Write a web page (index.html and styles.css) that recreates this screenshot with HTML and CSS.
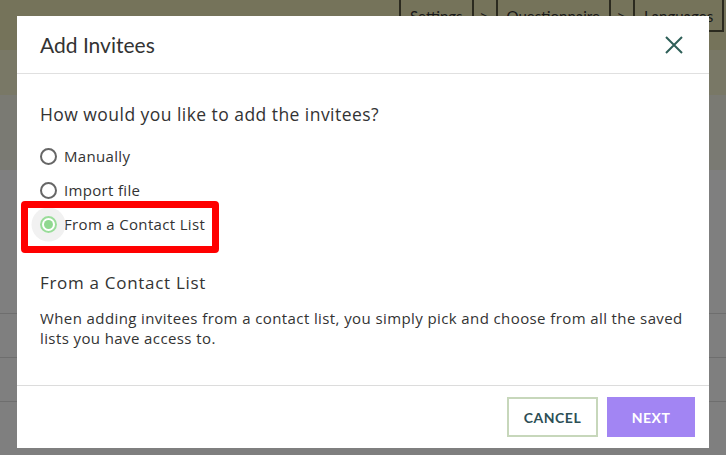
FILE: index.html
```html
<!DOCTYPE html>
<html lang="en">
<head>
    <meta charset="UTF-8">
    <meta name="viewport" content="width=device-width, initial-scale=1.0">
    <title>Add Invitees</title>
    <link rel="stylesheet" href="styles.css">
</head>
<body>
    <header class="topbar">
        <nav class="crumbs">
            <span class="crumb">Settings</span>
            <span class="sep">&gt;</span>
            <span class="crumb">Questionnaire</span>
            <span class="sep">&gt;</span>
            <span class="crumb">Languages</span>
        </nav>
    </header>
    <div class="band band-a"></div>
    <div class="band band-b"></div>
    <div class="table">
        <div class="table-row"></div>
        <div class="table-row"></div>
        <div class="table-row"></div>
    </div>

    <!-- Add invitees dialog -->
    <div class="overlay">
        <div class="modal" role="dialog" aria-labelledby="modalTitle">
            <div class="modal-head">
                <h2 class="modal-title" id="modalTitle">Add Invitees</h2>
                <button class="close" type="button" aria-label="Close">
                    <svg width="18" height="18" viewBox="0 0 18 18">
                        <path d="M1 1L17 17M17 1L1 17" stroke="#2e5f58" stroke-width="2" fill="none"/>
                    </svg>
                </button>
            </div>

            <div class="modal-body">
                <h3 class="question">How would you like to add the invitees?</h3>
                <div class="options">
                    <label class="option">
                        <span class="radio"></span>
                        <span>Manually</span>
                    </label>
                    <label class="option">
                        <span class="radio"></span>
                        <span>Import file</span>
                    </label>
                    <label class="option is-selected">
                        <span class="radio"></span>
                        <span>From a Contact List</span>
                        <span class="highlight"></span>
                    </label>
                </div>

                <h3 class="detail-title">From a Contact List</h3>
                <p class="detail-text">When adding invitees from a contact list, you simply pick and choose from all the saved lists you have access to.</p>
            </div>

            <div class="modal-foot">
                <button class="btn btn-outline" type="button">Cancel</button>
                <button class="btn btn-primary" type="button">Next</button>
            </div>
        </div>
    </div>
</body>
</html>
```

FILE: styles.css
```css
/* General Styles */
* {
    box-sizing: border-box;
}

body {
    margin: 0;
    height: 455px;
    overflow: hidden;
    font-family: 'Open Sans', sans-serif;
    color: #333;
    background-color: #fff;
}

/* Page behind the dialog */
.topbar {
    height: 50px;
    padding-left: 399px;
    background-color: #eae6b4;
    overflow: hidden;
}

.crumbs {
    display: flex;
    white-space: nowrap;
}

.crumb {
    flex: none;
    height: 32px;
    padding: 2px 9px 0;
    display: flex;
    align-items: center;
    border: 2px solid #56543f;
    border-top: none;
    font-family: 'Lato', sans-serif;
    font-size: 15px;
}

.sep {
    flex: none;
    width: 22px;
    text-align: center;
    line-height: 32px;
    font-size: 15px;
}

.band-a {
    height: 45px;
    background-color: #f2f0cc;
}

.band-b {
    height: 75px;
    background-color: #f4f4e6;
}

.table {
    margin-top: 143px;
}

.table-row {
    height: 44px;
    border-top: 1px solid #dcdcdc;
}

/* Dialog */
.overlay {
    position: fixed;
    inset: 0;
    padding-top: 16px;
    background-color: rgba(0, 0, 0, 0.5);
}

.modal {
    width: 692px;
    margin: 0 auto;
    background-color: #fff;
}

.modal-head {
    height: 58px;
    padding: 0 23px;
    display: flex;
    align-items: center;
    justify-content: space-between;
    border-bottom: 1px solid #e0e0e0;
}

.modal-title {
    margin: 0;
    font-family: 'Lato', sans-serif;
    font-size: 21px;
    font-weight: 400;
}

.close {
    width: 24px;
    height: 24px;
    padding: 0;
    border: none;
    background: none;
    display: flex;
    align-items: center;
    justify-content: center;
}

.modal-body {
    padding: 28px 23px 37px;
}

.question {
    margin: 0;
    font-size: 17.5px;
    line-height: 24px;
    font-weight: 400;
    letter-spacing: 0.45px;
}

.options {
    margin-top: 13px;
    display: flex;
    flex-direction: column;
}

.option {
    position: relative;
    height: 34px;
    display: flex;
    align-items: center;
    gap: 7px;
    font-size: 15px;
    letter-spacing: 0.33px;
}

.radio {
    position: relative;
    flex: none;
    width: 17px;
    height: 17px;
    border: 2px solid #666;
    border-radius: 50%;
}

.option.is-selected .radio {
    border-color: #9adc9a;
    box-shadow: 0 0 0 8.5px #f1f1f1;
}

.option.is-selected .radio::after {
    content: "";
    position: absolute;
    top: 2px;
    left: 2px;
    width: 9px;
    height: 9px;
    border-radius: 50%;
    background-color: #90d890;
}

/* red annotation round the chosen option */
.highlight {
    position: absolute;
    top: -6px;
    left: -19px;
    width: 198px;
    height: 52px;
    border: 7px solid #f00;
    border-radius: 4px;
}

.detail-title {
    margin: 31px 0 0;
    font-size: 17px;
    line-height: 22px;
    font-weight: 400;
    letter-spacing: 0.7px;
}

.detail-text {
    margin: 14px 0 0;
    font-size: 15px;
    line-height: 20px;
    letter-spacing: 0.4px;
}

.modal-foot {
    padding: 11px 14px;
    display: flex;
    justify-content: flex-end;
    gap: 9px;
    border-top: 1px solid #dcdcdc;
}

.btn {
    height: 40px;
    font-family: 'Lato', sans-serif;
    font-size: 14px;
    font-weight: 700;
    letter-spacing: 0.5px;
    text-transform: uppercase;
    cursor: pointer;
}

.btn-outline {
    width: 91px;
    border: 2px solid #c7d7bb;
    background-color: #fff;
    color: #2d4f55;
}

.btn-primary {
    width: 88px;
    border: none;
    background-color: #a285f3;
    color: #fff;
}
```
